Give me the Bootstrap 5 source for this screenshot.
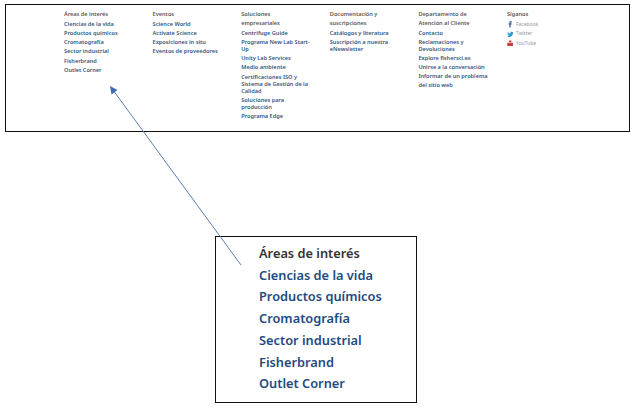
<!DOCTYPE html>
<html lang="es">
  <head>
    <meta charset="UTF-8" />
    <meta name="viewport" content="width=device-width, initial-scale=1" />
    <title>Áreas de interés</title>
    <link
      href="https://cdn.jsdelivr.net/npm/bootstrap@5.3.0/dist/css/bootstrap.min.css"
      rel="stylesheet"
    />
    <style>
      body {
        background-color: #fff;
        font-family: "Noto Sans", "Open Sans", sans-serif;
        width: 635px;
        height: 408px;
        overflow: hidden;
        position: relative;
      }
      .footer-box {
        margin: 4px 0 0 5px;
        width: 625px;
        height: 128px;
        border: 1.5px solid #111;
        padding: 5px 0 0 58px;
        font-size: 5.6px;
        font-weight: 600;
      }
      .footer-col {
        width: 88.6px;
        padding-right: 6px;
      }
      .footer-head {
        color: #55585c;
        line-height: 9px;
        margin-bottom: 0.7px;
      }
      .footer-link {
        display: block;
        color: #34557f;
        text-decoration: none;
        line-height: 7px;
        padding: 1.2px 0 1px;
      }
      .footer-link.tall {
        line-height: 9px;
        padding: 0;
      }
      .social-row {
        display: flex;
        align-items: center;
        gap: 2.5px;
        height: 9.5px;
        color: #949aa3;
        font-size: 5px;
        font-weight: 400;
      }
      .social-row svg {
        width: 6.5px;
        height: 6.5px;
        flex: none;
      }
      .zoom-box {
        margin: 104px 0 0 215px;
        width: 202px;
        height: 167px;
        border: 1.5px solid #111;
        padding: 6px 0 0 43px;
        font-size: 12.8px;
        font-weight: 600;
      }
      .zoom-box div {
        line-height: 21.7px;
        color: #1f4a80;
      }
      .zoom-box .zoom-head {
        color: #333;
      }
      .pointer-arrow {
        position: absolute;
        left: 0;
        top: 0;
        pointer-events: none;
      }
    </style>
  </head>
  <body>
    <div class="footer-box d-flex">
      <div class="footer-col">
        <div class="footer-head">Áreas de interés</div>
        <a class="footer-link" href="#">Ciencias de la vida</a>
        <a class="footer-link" href="#">Productos químicos</a>
        <a class="footer-link" href="#">Cromatografía</a>
        <a class="footer-link" href="#">Sector industrial</a>
        <a class="footer-link" href="#">Fisherbrand</a>
        <a class="footer-link" href="#">Outlet Corner</a>
      </div>
      <div class="footer-col">
        <div class="footer-head">Eventos</div>
        <a class="footer-link" href="#">Science World</a>
        <a class="footer-link" href="#">Activate Science</a>
        <a class="footer-link" href="#">Exposiciones in situ</a>
        <a class="footer-link" href="#">Eventos de proveedores</a>
      </div>
      <div class="footer-col">
        <div class="footer-head">Soluciones<br />empresariales</div>
        <a class="footer-link" href="#">Centrifuge Guide</a>
        <a class="footer-link" href="#">Programa New Lab Start-<br />Up</a>
        <a class="footer-link" href="#">Unity Lab Services</a>
        <a class="footer-link" href="#">Medio ambiente</a>
        <a class="footer-link" href="#">Certificaciones ISO y<br />Sistema de Gestión de la<br />Calidad</a>
        <a class="footer-link" href="#">Soluciones para<br />producción</a>
        <a class="footer-link" href="#">Programa Edge</a>
      </div>
      <div class="footer-col">
        <div class="footer-head">Documentación y<br />suscripciones</div>
        <a class="footer-link" href="#">Catálogos y literatura</a>
        <a class="footer-link" href="#">Suscripción a nuestra<br />eNewsletter</a>
      </div>
      <div class="footer-col">
        <div class="footer-head">Departamento de<br />Atención al Cliente</div>
        <a class="footer-link" href="#">Contacto</a>
        <a class="footer-link" href="#">Reclamaciones y<br />Devoluciones</a>
        <a class="footer-link" href="#">Explore fishersci.es</a>
        <a class="footer-link" href="#">Unirse a la conversación</a>
        <a class="footer-link tall" href="#">Informar de un problema<br />del sitio web</a>
      </div>
      <div class="footer-col">
        <div class="footer-head">Síganos</div>
        <div class="social-row">
          <svg viewBox="0 0 8 8"><path fill="#2f4f7f" d="M3 8V4.400H2V3.100h1V2.200C3 1 3.700.4 4.800.4h1v1.300h-.7c-.5 0-.7.2-.7.6v.8h1.400l-.2 1.300H4.400V8z"/></svg>
          <span>Facebook</span>
        </div>
        <div class="social-row">
          <svg viewBox="0 0 8 8"><path fill="#2a9fd6" d="M8 1.700c-.3.1-.6.2-.9.2.3-.2.6-.5.7-.9-.3.200-.6.300-1 .4C6.500 1.100 6.100 1 5.700 1c-.9 0-1.600.7-1.600 1.600 0 .1 0 .2 0 .4C2.800 2.900 1.600 2.300.8 1.300c-.4.700-.2 1.600.5 2.100-.3 0-.5-.1-.7-.2 0 .8.5 1.400 1.300 1.600-.2.100-.5.100-.7 0 .2.600.8 1.100 1.500 1.100C2.100 6.500 1.100 6.800.2 6.700 1 7.200 1.800 7.400 2.700 7.400c3 0 4.800-2.500 4.500-4.900.3-.2.600-.5.800-.8z"/></svg>
          <span>Twitter</span>
        </div>
        <div class="social-row">
          <svg viewBox="0 0 8 8"><rect x="0.300" y="3.500" width="7.400" height="4" rx="0.800" fill="#c8413b"/><rect x="2.500" y="0.500" width="3" height="2.400" rx="0.500" fill="#c8413b"/></svg>
          <span>YouTube</span>
        </div>
      </div>
    </div>

    <div class="zoom-box">
      <div class="zoom-head">Áreas de interés</div>
      <div>Ciencias de la vida</div>
      <div>Productos químicos</div>
      <div>Cromatografía</div>
      <div>Sector industrial</div>
      <div>Fisherbrand</div>
      <div>Outlet Corner</div>
    </div>

    <svg class="pointer-arrow" width="635" height="408" viewBox="0 0 635 408">
      <line x1="241" y1="265" x2="113" y2="90" stroke="#5b7fb8" stroke-width="1" />
      <polygon points="110,86 117.500,90 111.500,94.500" fill="#4468b8" />
    </svg>
  </body>
</html>
